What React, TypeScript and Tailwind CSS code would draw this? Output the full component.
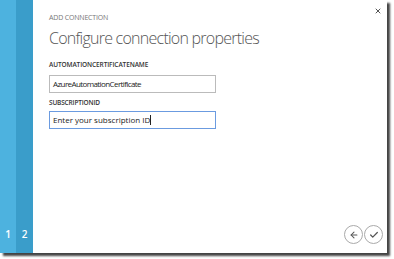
import { ArrowLeft, Check, X } from "lucide-react";

export default function App() {
  return (
    <div className="w-[394px] h-[259px] bg-white relative overflow-hidden font-['Open_Sans',sans-serif]">
      <div className="flex w-[387px] h-[253px] bg-white shadow-[3px_3px_2px_#444]">
        <div className="w-[16px] bg-[#4db2df] flex flex-col justify-end items-center pb-[14px]">
          <span className="text-white text-[10px] font-semibold leading-none">1</span>
        </div>
        <div className="w-[17px] bg-[#3a9dca] flex flex-col justify-end items-center pb-[14px]">
          <span className="text-white text-[10px] font-semibold leading-none">2</span>
        </div>
        <div className="flex-1 relative pl-[16px] pt-[14px]">
          <X className="absolute right-[5px] top-[7px] w-[8px] h-[8px] text-[#555]" strokeWidth={3} />
          <div className="text-[7px] text-[#777] leading-none tracking-tight">ADD CONNECTION</div>
          <h1 className="mt-[9px] text-[16px] font-light text-[#555] leading-none tracking-[-0.75px]">
            Configure connection properties
          </h1>
          <div className="mt-[16px] text-[6.5px] text-[#333] leading-none font-semibold tracking-[-0.1px]">
            AUTOMATIONCERTIFICATENAME
          </div>
          <div className="mt-[6px] w-[167px] h-[18px] border border-[#bbb] flex items-center px-[3px] text-[8px] text-[#222] tracking-[-0.6px]">
            AzureAutomationCertificate
          </div>
          <div className="mt-[7px] text-[6.5px] text-[#333] leading-none font-semibold tracking-tight">
            SUBSCRIPTIONID
          </div>
          <div className="mt-[5px] w-[167px] h-[18px] border border-[#6b9be0] flex items-center px-[3px] text-[8px] text-[#222]">
            Enter your subscription ID<span className="w-px h-[10px] bg-[#222]" />
          </div>
          <div className="absolute right-[4px] bottom-[9px] flex gap-[1px]">
            <div className="w-[19px] h-[19px] rounded-full border border-[#aaa] flex items-center justify-center">
              <ArrowLeft className="w-[10px] h-[10px] text-[#555]" strokeWidth={2.5} />
            </div>
            <div className="w-[19px] h-[19px] rounded-full border border-[#aaa] flex items-center justify-center">
              <Check className="w-[10px] h-[10px] text-[#555]" strokeWidth={3} />
            </div>
          </div>
        </div>
      </div>
    </div>
  );
}
